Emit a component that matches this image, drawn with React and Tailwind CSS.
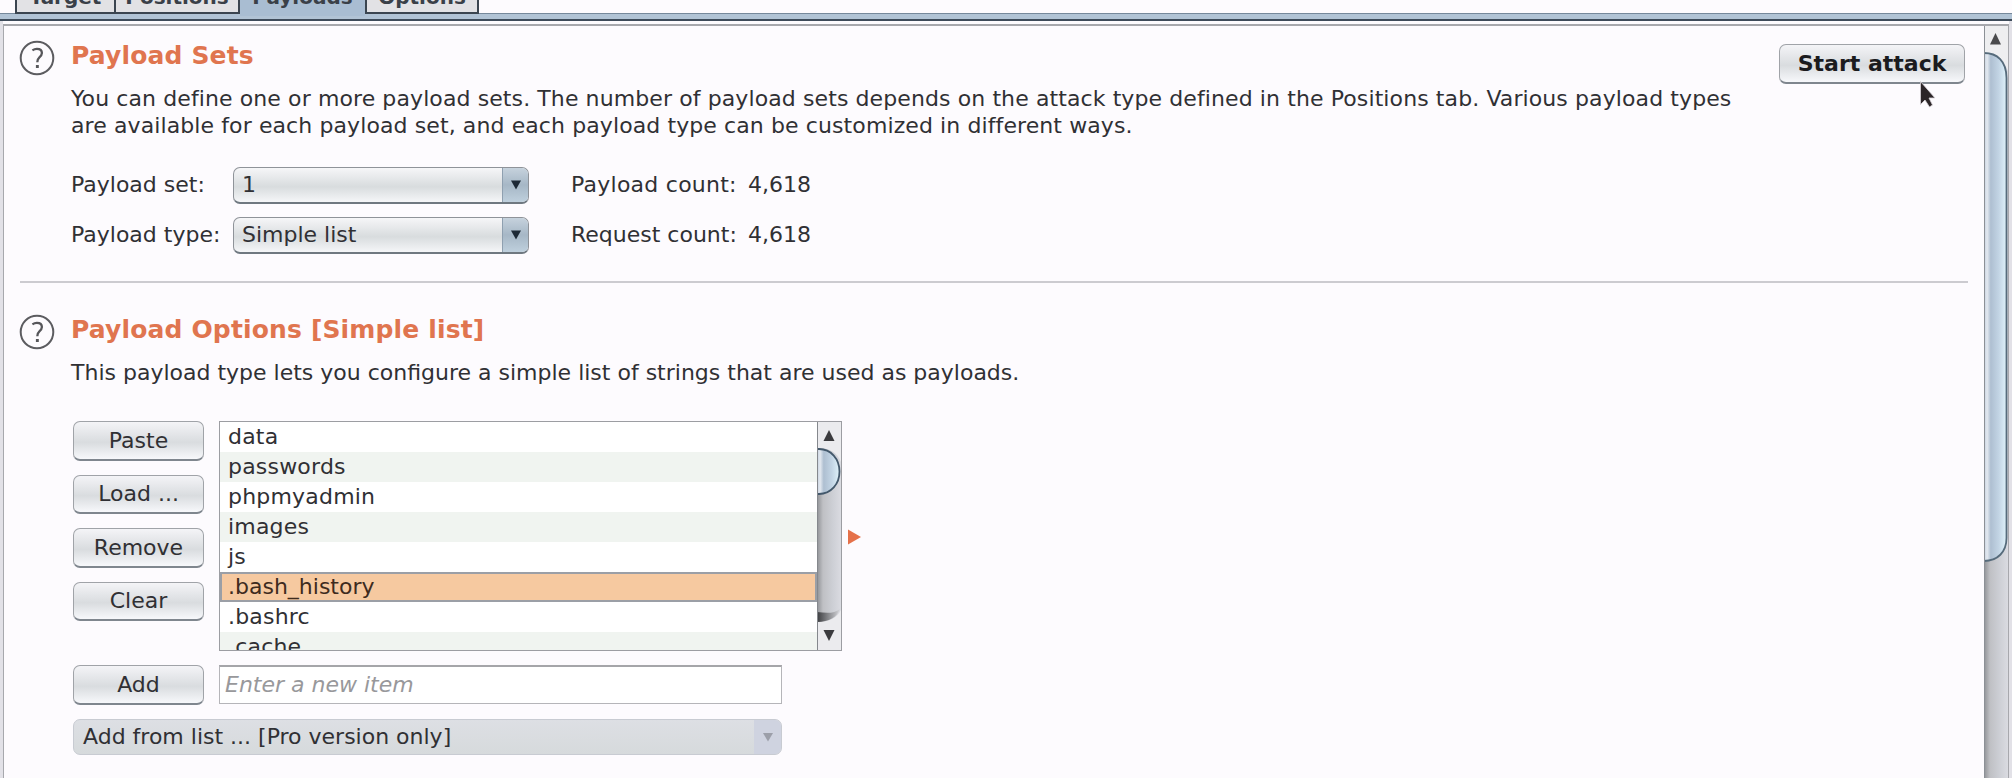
import React from "react";

function HelpIcon() {
  return (
    <svg width="36" height="36" viewBox="0 0 36 36" className="shrink-0">
      <circle cx="18" cy="18" r="16.3" fill="none" stroke="#5c5c60" strokeWidth="2" />
      <path d="M13.4 10.4c1.400-1 2.900-1.500 4.500-1.500 3.100 0 5 1.600 5 4.100 0 1.900-1 3-2.500 4.300-1.600 1.400-2.100 2.300-2.100 4.900" fill="none" stroke="#56565a" strokeWidth="2.300" />
      <rect x="16.900" y="25" width="2.900" height="3" fill="#56565a" />
    </svg>
  );
}

function Button({ children, className = "" }) {
  return (
    <div
      className={
        "flex items-center justify-center rounded-[7px] border border-[#a0a3a8] border-b-2 border-b-[#7f868e] bg-linear-to-b from-[#f4f4f7] via-[#d9dcdf] via-55% to-[#f7f8fb] " +
        className
      }
    >
      {children}
    </div>
  );
}

function Combo({ children }) {
  return (
    <div className="flex h-[37px] w-[296px] overflow-hidden rounded-[7px] border border-[#8f9399] border-b-2 border-b-[#6f7880] bg-linear-to-b from-[#f6f6f8] via-[#d8dcde] via-55% to-[#f5f6f8]">
      <div className="flex-1 pl-[8px] leading-[33px]">{children}</div>
      <div className="flex w-[26px] items-center justify-center border-l border-[#8fa0b0] bg-linear-to-b from-[#c6d2dd] via-[#a6b7c6] via-50% to-[#bfd0dd]">
        <svg width="12" height="10" viewBox="0 0 12 10"><path d="M1 0.5h10L6 9.5z" fill="#1d2935" /></svg>
      </div>
    </div>
  );
}

function Section({ title, children }) {
  return (
    <section className="flex">
      <div className="w-[52px] shrink-0"><HelpIcon /></div>
      <div className="min-w-0 flex-1">
        <h2 className="h-[34px] pt-px text-[25px] leading-[30px] font-bold tracking-[0.15px] text-[#e0754f]">{title}</h2>
        {children}
      </div>
    </section>
  );
}

const items = ["data", "passwords", "phpmyadmin", "images", "js", ".bash_history", ".bashrc", ".cache"];

function Row({ text, index }) {
  if (index === 5)
    return <div className="h-[30px] shrink-0 border-2 border-[#9b9fa6] bg-[#f6c9a0] pl-[6px] leading-[25px] text-[#3e2b1e]">{text}</div>;
  return (
    <div className={"h-[30px] shrink-0 pl-2 leading-[29px] tracking-[0.2px] " + (index % 2 ? "bg-[#f0f4f0]" : "bg-white")}>{text}</div>
  );
}

function ListScroll() {
  return (
    <svg width="24" height="228" viewBox="0 0 24 228" className="shrink-0">
      <defs>
        <linearGradient id="track"><stop offset="0" stopColor="#8f9195" /><stop offset=".25" stopColor="#bfc0c4" /><stop offset=".65" stopColor="#cdcfd5" /><stop offset="1" stopColor="#dadbe1" /></linearGradient>
        <linearGradient id="thumb"><stop offset="0" stopColor="#c3cfdd" /><stop offset=".14" stopColor="#e4e9f0" /><stop offset=".3" stopColor="#aebfd1" /><stop offset=".65" stopColor="#c2d4e4" /><stop offset="1" stopColor="#dff2fa" /></linearGradient>
        <linearGradient id="shade" x1="0" y1="0" x2="1" y2="0"><stop offset="0" stopColor="#3b3c3f" /><stop offset="1" stopColor="#d5d6da" /></linearGradient>
      </defs>
      <rect width="24" height="228" fill="url(#track)" />
      <path d="M0 0h24v40C20 30 12 26 0 26z" fill="#ebebee" />
      <path d="M0 228h24V188C20 196 12 200 0 200z" fill="#ebebee" />
      <path d="M0 190c9 1 17 2 23-3-3 8-11 13-23 13z" fill="url(#shade)" />
      <path d="M0 27h2c12 0 20.500 10 20.500 22.500S14 72 2 72H0z" fill="url(#thumb)" />
      <path d="M0 27h2c12 0 20.500 10 20.500 22.500S14 72 2 72H0" fill="none" stroke="#43586b" strokeWidth="1.800" />
      <path d="M0.500 0v228" stroke="#85888d" />
      <path d="M6.500 19L12 8l5.500 11z" fill="#3b3b3e" />
      <path d="M6.500 208h11L12 219z" fill="#3b3b3e" />
    </svg>
  );
}

function PageScroll() {
  return (
    <svg width="24" height="753" viewBox="0 0 24 753" className="shrink-0">
      <rect width="24" height="753" fill="url(#track)" />
      <path d="M0 0h24v45C18 30 12 27 0 27z" fill="#eeeef0" />
      <path d="M0 27c13 0 22.500 8 22.500 25V512c0 14-9 23-22.500 23z" fill="url(#thumb)" />
      <path d="M0 27c13 0 22.500 8 22.500 25V512c0 14-9 23-22.500 23" fill="none" stroke="#566b7b" strokeWidth="1.800" />
      <path d="M0.500 0v753" stroke="#8c9096" />
      <path d="M6 18.500L11.500 7 17 18.500z" fill="#4a4a4c" />
    </svg>
  );
}

const tabBase = "h-[14px] overflow-hidden text-center text-[20px] leading-[26px] font-bold text-[#3a4048] border-[#3b4550]";

export default function App() {
  return (
    <div className="flex h-screen w-full flex-col overflow-hidden bg-[#fdfbfe] font-['DejaVu_Sans',sans-serif] text-[22px] text-[#303034]">
      <nav className="z-10 flex h-[13px] shrink-0 pl-[15px]">
        <div className={tabBase + " w-[101px] border-x-2 border-b-2 bg-[#e2e2e5]"}><div className="-mt-[16px]">Target</div></div>
        <div className={tabBase + " w-[124px] border-r-2 border-b-2 bg-[#e2e2e5]"}><div className="-mt-[16px]">Positions</div></div>
        <div className={tabBase + " h-[16px] w-[125px] bg-[#a9bdd2]"}><div className="-mt-[16px]">Payloads</div></div>
        <div className={tabBase + " w-[114px] border-x-2 border-b-2 bg-[#e2e2e5]"}><div className="-mt-[16px]">Options</div></div>
      </nav>
      <div className="h-2 shrink-0 border-t border-b-2 border-t-[#76889b] border-b-[#3e4b5a] bg-[#b1c3d5]" />
      <div className="flex min-h-0 flex-1 border-x-[3px] border-x-[#e2e1e7] pt-[3px]">
        <main className="flex min-h-0 flex-1 overflow-hidden border-x border-t-2 border-[#a7a8ad]">
          <div className="min-w-0 flex-1 pt-[14px] pr-4 pl-[15px]">
            <div className="flex h-[242px]">
              <div className="flex-1">
                <Section title="Payload Sets">
                  <div className="mt-[6px] h-[78px] pt-[5px] leading-[27px] tracking-[0.1px] whitespace-nowrap">
                    <p>You can define one or more payload sets. The number of payload sets depends on the attack type defined in the Positions tab. Various payload types</p>
                    <p>are available for each payload set, and each payload type can be customized in different ways.</p>
                  </div>
                  <div className="mt-[9px] grid grid-cols-[162px_338px_177px_auto] gap-y-[13px] leading-[35px] whitespace-nowrap">
                    <span>Payload set:</span><Combo>1</Combo><span className="tracking-[0.25px]">Payload count:</span><span>4,618</span>
                    <span>Payload type:</span><Combo>Simple list</Combo><span>Request count:</span><span>4,618</span>
                  </div>
                </Section>
              </div>
              <div className="relative mr-[3px] w-[186px] shrink-0 pt-[4px]">
                <Button className="h-[40px] font-bold text-[#1b1b1e]"><span className="-mt-px">Start attack</span></Button>
                <svg width="20" height="28" viewBox="0 0 20 28" className="absolute top-[41px] left-[140px]">
                  <path d="M1.500 0.500v23l4.500-4.500 4.500 7 3-2-3.500-7h6z" fill="#2c2528" stroke="#d9d4d9" strokeWidth="0.800" />
                </svg>
              </div>
            </div>
            <div className="mt-[-1px] mb-px ml-px h-[2px] bg-[#cccbd0]" />
            <div className="pt-[30px]">
              <Section title="Payload Options [Simple list]">
                <p className="mt-[7px] h-[66px] pt-[4px] leading-[27px]">This payload type lets you configure a simple list of strings that are used as payloads.</p>
                <div className="flex pl-[2px]">
                  <div className="flex w-[146px] flex-col gap-[14px]">
                    {["Paste", "Load ...", "Remove", "Clear"].map((b) => (
                      <Button key={b} className="h-[39.500px] w-[131px]"><span>{b}</span></Button>
                    ))}
                  </div>
                  <div className="flex h-[230px] w-[623px] overflow-hidden border border-[#9c9da2]">
                    <div className="flex flex-1 flex-col overflow-hidden">
                      {items.map((t, i) => <Row key={t} text={t} index={i} />)}
                    </div>
                    <ListScroll />
                  </div>
                  <svg width="14" height="16" viewBox="0 0 14 16" className="mt-[108px] ml-[6px]"><path d="M0 0.500L13 8 0 15.500z" fill="#e5714a" /></svg>
                </div>
                <div className="mt-[14px] flex pl-[2px]">
                  <Button className="h-[40px] w-[131px]"><span className="-mt-px">Add</span></Button>
                  <div className="ml-[15px] h-[39px] w-[563px] border border-t-2 border-[#b5b5b9] border-t-[#a5a5a9] bg-white pl-[5px] leading-[35px] text-[#98989b] italic">Enter a new item</div>
                </div>
                <div className="mt-[14px] ml-[2px] flex h-[36px] w-[709px] overflow-hidden rounded-[7px] border border-[#c8cbd2] bg-linear-to-b from-[#dddfe4] to-[#d6dadc]">
                  <div className="flex-1 pl-[9px] leading-[33px]">Add from list ... [Pro version only]</div>
                  <div className="flex w-[27px] items-center justify-center bg-[#cfd3e0]">
                    <svg width="12" height="9" viewBox="0 0 12 9"><path d="M1 0h10L6 8.500z" fill="#9c9fa9" /></svg>
                  </div>
                </div>
              </Section>
            </div>
          </div>
          <PageScroll />
        </main>
      </div>
    </div>
  );
}
